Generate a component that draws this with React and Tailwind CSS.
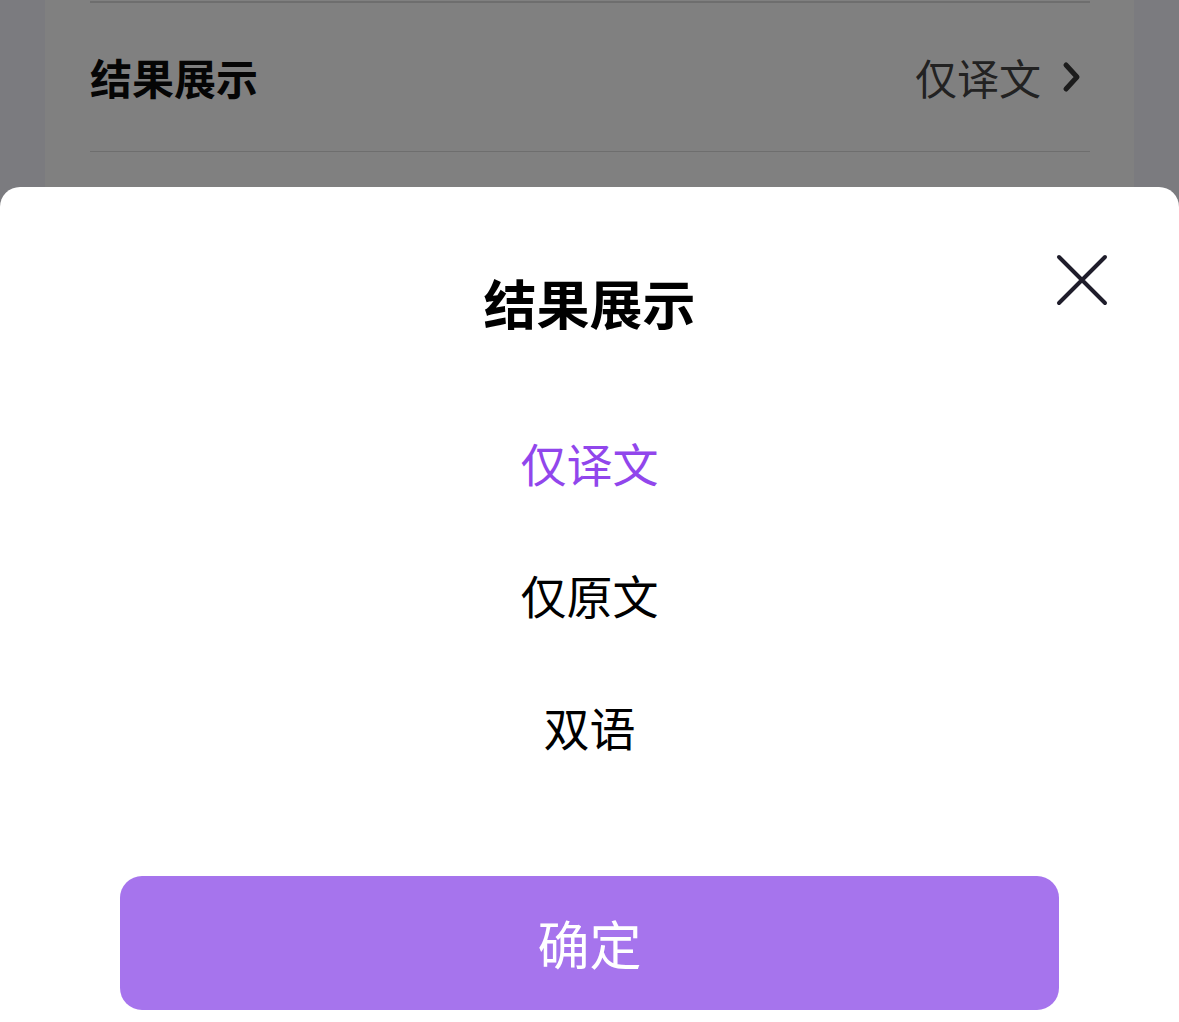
import { useState } from 'react'

const options = ['仅译文', '仅原文', '双语']

const CloseIcon = () => (
  <svg width="56" height="56" viewBox="0 0 56 56" fill="none">
    <path d="M5 5 L51 51 M51 5 L5 51" stroke="#1f1d2b" strokeWidth="4" strokeLinecap="round" />
  </svg>
)

const ChevronRight = () => (
  <svg width="22" height="32" viewBox="0 0 22 32" fill="none">
    <path d="M5 4 L16 16 L5 28" stroke="#1c1c1c" strokeWidth="5" strokeLinecap="round" strokeLinejoin="round" />
  </svg>
)

const App = () => {
  const [selected, setSelected] = useState(0)

  return (
    <div
      className="w-[1179px] h-[1022px] overflow-hidden flex flex-col bg-[#7b7b7f]"
      style={{ fontFamily: '"Noto Sans CJK SC", "Noto Sans", sans-serif' }}
    >
      {/* Dimmed settings page behind the sheet */}
      <div className="h-[187px] shrink-0 mx-[45px] bg-[#808080] pl-[45px] pr-[44px]">
        <div className="mt-px h-[2px] bg-[#6e6e6e]" />
        <div className="h-[148px] flex items-center justify-between">
          <span className="text-[42px] leading-none font-bold text-[#050505]">结果展示</span>
          <div className="flex items-center gap-[20px] pr-[7px]">
            <span className="text-[42px] leading-none text-[#222222]">仅译文</span>
            <ChevronRight />
          </div>
        </div>
        <div className="h-px bg-[#6e6e6e]" />
      </div>

      {/* Bottom sheet */}
      <div className="relative flex-1 bg-white rounded-t-[20px] flex flex-col items-center">
        <button className="absolute left-[1054px] top-[65px]">
          <CloseIcon />
        </button>

        <h2 className="mt-[89px] h-[53px] text-[53px] leading-none font-bold text-black">结果展示</h2>

        <div className="mt-[67px] w-full flex flex-col">
          {options.map((opt, i) => (
            <button
              key={opt}
              onClick={() => setSelected(i)}
              className={`h-[132px] flex items-center justify-center text-[46px] leading-none ${
                selected === i ? 'text-[#9146ec]' : 'text-black'
              }`}
            >
              {opt}
            </button>
          ))}
        </div>

        <button className="mt-[84px] w-[939px] h-[134px] rounded-[22px] bg-[#a674ed] text-white text-[52px] leading-none">
          确定
        </button>
      </div>
    </div>
  )
}

export default App
